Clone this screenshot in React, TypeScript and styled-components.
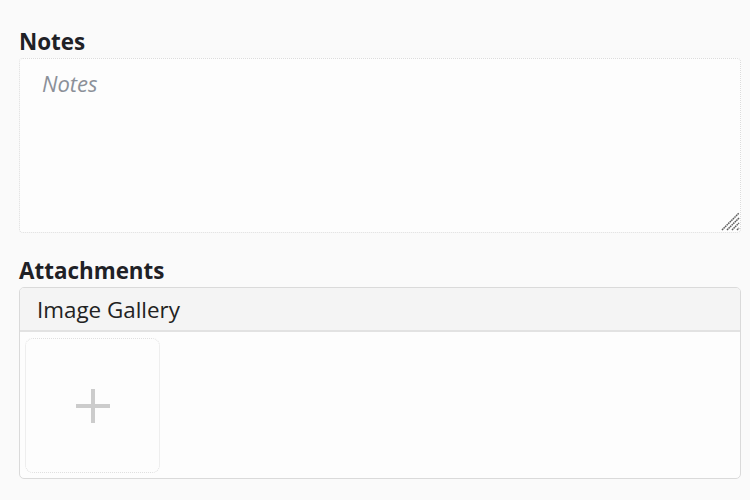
import React from "react";
import styled, { createGlobalStyle } from "styled-components";

const Global = createGlobalStyle`
  html, body { margin: 0; padding: 0; background: #fafafa; }
  body { font-family: "Open Sans", "Noto Sans", sans-serif; color: #222; }
  * { box-sizing: border-box; }
`;

const Page = styled.div`
  display: flex;
  flex-direction: column;
  padding: 27px 9px 0 19px;
  width: 750px;
`;

const Field = styled.div<{ $gap?: number }>`
  display: flex;
  flex-direction: column;
  margin-bottom: ${(p) => p.$gap ?? 0}px;
`;

const Label = styled.label`
  font-size: 22.4px;
  font-weight: 700;
  color: #1f2126;
  line-height: 30px;
  margin-bottom: 1px;
`;

const AreaWrap = styled.div`
  position: relative;
  width: 722px;
  height: 175px;
`;

const NotesArea = styled.textarea`
  width: 100%;
  height: 100%;
  padding: 8px 22px;
  font-family: "Open Sans", "Noto Sans", sans-serif;
  font-size: 22px;
  line-height: 1.5;
  color: #222;
  background: #fdfdfd;
  border: 1px dotted #dcdcdc;
  border-radius: 4px;
  outline: none;
  resize: none;
  display: block;
  &::placeholder {
    color: #8b9099;
    font-style: italic;
  }
`;

const Grip = styled.svg`
  position: absolute;
  right: 1px;
  bottom: 2px;
  pointer-events: none;
`;

const Gallery = styled.div`
  width: 722px;
  border: 1px solid #dadada;
  border-radius: 5px;
  background: #fdfdfd;
  overflow: hidden;
  display: flex;
  flex-direction: column;
`;

const GalleryHeader = styled.div`
  height: 44px;
  background: #f4f4f4;
  border-bottom: 2px solid #e2e2e2;
  padding: 0 17px;
  display: flex;
  align-items: center;
  font-size: 22.4px;
  color: #222;
`;

const GalleryBody = styled.div`
  display: flex;
  flex-wrap: wrap;
  gap: 6px;
  padding: 6px 5px 5px;
`;

const AddTile = styled.button`
  width: 135px;
  height: 135px;
  border: 1px dotted #e0e0e0;
  border-radius: 8px;
  background: #fdfdfd;
  display: flex;
  align-items: center;
  justify-content: center;
  padding: 0;
  cursor: pointer;
`;

export default function App() {
  return (
    <>
      <Global />
      <Page>
        <Field $gap={23}>
          <Label>Notes</Label>
          <AreaWrap>
            <NotesArea placeholder="Notes" />
            <Grip width="19" height="19" viewBox="0 0 19 19" aria-hidden="true">
              <g stroke="#5e5e5e" strokeWidth="1.5" strokeDasharray="1.6 0.6">
                <line x1="1" y1="18" x2="18" y2="1" />
                <line x1="6" y1="18" x2="18" y2="6" />
                <line x1="11" y1="18" x2="18" y2="11" />
                <line x1="16" y1="18" x2="18" y2="16" />
              </g>
            </Grip>
          </AreaWrap>
        </Field>
        <Field>
          <Label>Attachments</Label>
          <Gallery>
            <GalleryHeader>Image Gallery</GalleryHeader>
            <GalleryBody>
              <AddTile aria-label="Add image">
                <svg width="34" height="34" viewBox="0 0 34 34">
                  <rect x="15" y="0" width="4" height="34" fill="#cccccc" />
                  <rect x="0" y="15" width="34" height="4" fill="#cccccc" />
                </svg>
              </AddTile>
            </GalleryBody>
          </Gallery>
        </Field>
      </Page>
    </>
  );
}
